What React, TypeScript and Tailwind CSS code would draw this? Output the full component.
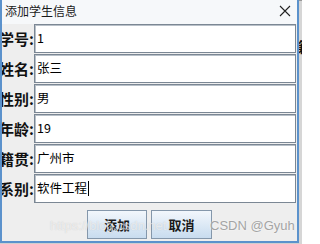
import React from "react";

const rows = [
  { label: "学号:", value: "1" },
  { label: "姓名:", value: "张三" },
  { label: "性别:", value: "男" },
  { label: "年龄:", value: "19" },
  { label: "籍贯:", value: "广州市" },
  { label: "系别:", value: "软件工程", caret: true },
];

const cjk = { fontFamily: '"Noto Sans CJK SC", "Liberation Sans", sans-serif' };

export default function App() {
  return (
    <div className="w-[302px] h-[244px] flex bg-[#cfcfcf] overflow-hidden" style={cjk}>
      <div className="relative w-[299px] h-[243px] flex flex-col border-x-2 border-b-2 border-[#5b92cc] bg-[#eeeeee]">
        {/* title bar */}
        <div className="h-[24px] flex items-start justify-between bg-[#f6f8fa] pl-[3px] pr-[4px]">
          <span className="text-[12px] leading-[16px] pt-[3px] text-[#1a1a1a]">添加学生信息</span>
          <svg width="12" height="12" viewBox="0 0 12 12" className="mt-[5px] mr-[2px]">
            <path d="M1 1 L11 11 M11 1 L1 11" stroke="#222" strokeWidth="1.1" fill="none" />
          </svg>
        </div>
        {/* rows */}
        <div className="flex flex-col gap-[1px]">
          {rows.map((r) => (
            <div key={r.label} className="flex h-[29px]">
              <div className="w-[32px] flex justify-end items-center overflow-hidden whitespace-nowrap">
                <span className="text-[15px] font-bold text-[#111] leading-none shrink-0">{r.label}</span>
              </div>
              <div className="w-[262px] h-[29px] border border-[#7b8794] bg-white flex items-center pl-[2px] shadow-[inset_1px_1px_0_#b8c0c8]">
                <span className="text-[12.5px] text-black leading-none">{r.value}</span>
                {r.caret && <span className="w-[1px] h-[15px] bg-black ml-[1px]" />}
              </div>
            </div>
          ))}
        </div>
        {/* buttons */}
        <div className="flex justify-center gap-[4px] mt-[7px]">
          <button className="w-[60px] h-[29px] border border-[#8497ab] bg-gradient-to-b from-[#f2f7fc] to-[#c8dcef] text-[13px] font-bold text-[#1a1a1a]">
            添加
          </button>
          <button className="w-[61px] h-[29px] border border-[#8497ab] bg-gradient-to-b from-[#f2f7fc] to-[#c8dcef] text-[13px] font-bold text-[#1a1a1a]">
            取消
          </button>
        </div>
        {/* watermark */}
        <span
          className="absolute left-[48px] top-[216px] text-[13px] text-white/60 whitespace-nowrap pointer-events-none"
          style={{ fontFamily: '"Liberation Sans", sans-serif', textShadow: "0 0 1px rgba(150,150,150,0.45)" }}
        >
          https://blog.csdn.net
        </span>
        <span
          className="absolute left-[208px] top-[216px] text-[13px] text-[#a4a4a4] whitespace-nowrap pointer-events-none"
          style={{ fontFamily: '"Liberation Sans", sans-serif', textShadow: "0 0 2px rgba(255,255,255,0.9)" }}
        >
          CSDN @Gyuh
        </span>
      </div>
      <div className="w-[3px] h-[244px] bg-[#d6d6d6] overflow-hidden pt-[38px] border-t border-[#999]">
        <span className="block text-[14px] font-bold leading-none text-[#111] -ml-[1px]">籍</span>
      </div>
    </div>
  );
}
